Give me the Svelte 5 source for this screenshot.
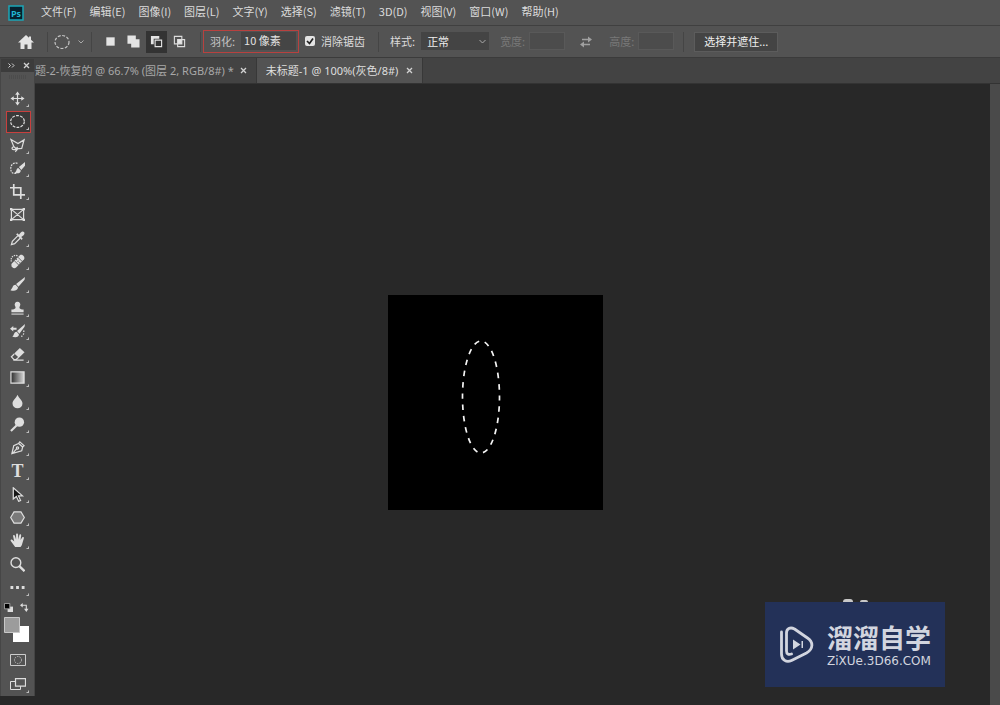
<script>
  const menus = ['文件(F)', '编辑(E)', '图像(I)', '图层(L)', '文字(Y)', '选择(S)', '滤镜(T)', '3D(D)', '视图(V)', '窗口(W)', '帮助(H)'];

  const tools = [
    { id: 'move', name: '移动' },
    { id: 'marquee', name: '椭圆选框' },
    { id: 'lasso', name: '多边形套索' },
    { id: 'quick', name: '快速选择' },
    { id: 'crop', name: '裁剪' },
    { id: 'frame', name: '图框', single: true },
    { id: 'eyedropper', name: '吸管' },
    { id: 'heal', name: '修复画笔' },
    { id: 'brush', name: '画笔' },
    { id: 'stamp', name: '仿制图章' },
    { id: 'history', name: '历史记录画笔' },
    { id: 'eraser', name: '橡皮擦' },
    { id: 'gradient', name: '渐变' },
    { id: 'blur', name: '模糊' },
    { id: 'dodge', name: '减淡' },
    { id: 'pen', name: '钢笔' },
    { id: 'type', name: '文字' },
    { id: 'select', name: '路径选择' },
    { id: 'shape', name: '多边形' },
    { id: 'hand', name: '抓手' },
    { id: 'zoom', name: '缩放', single: true },
    { id: 'more', name: '更多' }
  ];
  let active = $state('marquee');
  let feather = $state('10 像素');
  let smooth = $state(true);
</script>

{#snippet cross()}
  <svg width="7" height="7" viewBox="0 0 7 7" aria-hidden="true"><path d="M1 1l5 5M6 1 1 6" fill="none" stroke="#d2d2d2" stroke-width="1.300" /></svg>
{/snippet}

<div class="app">
  <nav class="menubar" aria-label="菜单">
    <svg class="logo" viewBox="0 0 16 16" aria-hidden="true">
      <rect x="1" y="1" width="14" height="14" fill="#06202f" stroke="#1ba6b8" stroke-width="1.500" />
      <text x="8" y="11.500" text-anchor="middle" font-size="9" font-weight="700" fill="#21b5d2">Ps</text>
    </svg>
    {#each menus as label}
      <button class="menu">{label}</button>
    {/each}
  </nav>

  <div class="options">
    <button class="home" aria-label="主页">
      <svg viewBox="0 0 16 16"><path fill="#e4e4e4" d="M8 1 0 8.500h2.500V15h4v-4.500h3V15h4V8.500H16L13 5.700V2.500h-2v1.300z" /></svg>
    </button>
    <i class="sep"></i>
    <button class="preset" aria-label="椭圆选框预设">
      <svg width="16" height="16" viewBox="0 0 16 16"><ellipse cx="8" cy="8" rx="7" ry="6.500" fill="none" stroke="#c4c4c4" stroke-width="1.200" stroke-dasharray="3 1.500" /></svg>
      <svg width="6" height="4" viewBox="0 0 6 4"><path d="M.5 .5 3 3 5.500 .5" fill="none" stroke="#aaa" /></svg>
    </button>
    <i class="sep"></i>
    <div class="modes">
      <button aria-label="新选区"><svg viewBox="0 0 14 14"><path fill="#e4e4e4" d="M2.500 2.500h9v9h-9z" /></svg></button>
      <button aria-label="添加到选区"><svg viewBox="0 0 14 14"><path fill="#e4e4e4" d="M.5 .5h9v4h4v9h-9v-4h-4z" /></svg></button>
      <button class="on" aria-label="从选区减去"><svg viewBox="0 0 14 14"><path fill="#e4e4e4" d="M1 1h9v3H4v6H1z" /><path fill="none" stroke="#e4e4e4" stroke-width="1.200" d="M5.500 5.500h7v7h-7z" /></svg></button>
      <button aria-label="与选区交叉"><svg viewBox="0 0 14 14"><path fill="none" stroke="#dcdcdc" stroke-width="1.200" d="M1.500 1.500h8v8h-8zM5 5h7.500v7.500H5z" /><path fill="#e4e4e4" d="M5 5h4.500v4.500H5z" /></svg></button>
    </div>
    <i class="sep"></i>
    <label class="feather">羽化:<input bind:value={feather} /></label>
    <label class="check">
      <input type="checkbox" bind:checked={smooth} />
      消除锯齿
    </label>
    <i class="sep"></i>
    <label class="style">样式:
      <span class="selectbox">
        <select><option>正常</option></select>
        <svg width="7" height="5" viewBox="0 0 7 5"><path d="M.5 1 3.500 4 6.500 1" fill="none" stroke="#aaa" /></svg>
      </span>
    </label>
    <label class="dim">宽度:<input disabled /></label>
    <button class="swap" aria-label="交换宽度和高度">
      <svg viewBox="0 0 12 12"><path fill="none" stroke="#a0a0a0" stroke-width="1.300" d="M2 3.500h7M3 8.500h7" /><path fill="#a0a0a0" d="M8 .5 12 3.500 8 6.500zM4 5.500 0 8.500l4 3z" /></svg>
    </button>
    <label class="dim">高度:<input disabled /></label>
    <i class="sep"></i>
    <button class="mask">选择并遮住...</button>
  </div>

  <div class="tabs" role="tablist">
    <div class="tab first"><button role="tab" aria-selected="false">题-2-恢复的 @ 66.7% (图层 2, RGB/8#) *</button><button class="close" aria-label="关闭">{@render cross()}</button></div>
    <div class="tab current"><button role="tab" aria-selected="true">未标题-1 @ 100%(灰色/8#)</button><button class="close" aria-label="关闭">{@render cross()}</button></div>
  </div>

  <main class="workspace">
    <div class="stage">
      <svg class="document" viewBox="0 0 215 215" role="img" aria-label="文档">
        <rect width="215" height="215" fill="#000" />
        <ellipse cx="93" cy="102" rx="18.500" ry="56" fill="none" stroke="#f4f4f4" stroke-width="1.700" stroke-dasharray="5.500 5.820" stroke-dashoffset="2" />
      </svg>
    </div>
    <div class="scrollbar"></div>
  </main>

  <aside class="toolbox" aria-label="工具">
    <header>
      <svg width="7" height="5" viewBox="0 0 7 5" aria-hidden="true"><path d="M.5 .5l2 2-2 2M4 .5l2 2-2 2" fill="none" stroke="#d2d2d2" /></svg>
      <button aria-label="关闭工具栏">{@render cross()}</button>
    </header>
    <div class="grip"></div>
    <div class="tools">
      {#each tools as t}
        <button class="tool" class:active={active === t.id} aria-label={t.name} onclick={() => (active = t.id)}>
          {#if t.id === 'type'}
            <span class="letter">T</span>
          {:else}
          <svg class="glyph" viewBox="0 0 16 16" fill="none" stroke="#dedede" stroke-width="1.300">
            {#if t.id === 'move'}
              <path d="M8 2v12M2 8h12" /><path fill="#dedede" stroke="none" d="M8 .5 10.500 4h-5zM8 15.500 5.500 12h5zM.5 8 4 5.500v5zM15.500 8 12 10.500v-5z" />
            {:else if t.id === 'marquee'}
              <ellipse cx="8" cy="8" rx="7.300" ry="6.300" stroke-dasharray="3 1.300" />
            {:else if t.id === 'lasso'}
              <path d="M1 1.500 8.500 6 15 2 12.500 11 6.500 11.500 4 9z" /><path d="M4 9.500c-2.500 0-2.500 3 0 3s3.500-1 3.500-3c1 2 0 4-2 5" />
            {:else if t.id === 'quick'}
              <path stroke-dasharray="2 1" d="M8 2.500C4 1 .8 4 .8 8s2 6 6 5" /><path fill="#dedede" stroke="none" d="M16 1 9.500 6.500l2.500 3L16 5zM8.800 7.500c-2.300.5-1.300 3.500-3.800 5 3 1.500 6.500.5 6.500-2.500z" />
            {:else if t.id === 'crop'}
              <path stroke-width="1.800" d="M4 0v11.500h12M0 4h11.500v12" />
            {:else if t.id === 'frame'}
              <path d="M1.500 2.500h13v11h-13zM1.500 2.500l13 11M14.500 2.500l-13 11" /><path fill="#dedede" stroke="none" d="M0 1h2.500v2.500H0zM13.500 1H16v2.500h-2.500zM0 12.500h2.500V15H0zM13.500 12.500H16V15h-2.500z" />
            {:else if t.id === 'eyedropper'}
              <path d="M8.500 5 2.500 11 1.500 14.500 5 13.500l6-6" /><path fill="#dedede" stroke="none" d="m6.500 3.500 1.500-1L9.500 4l2-2.500c2.500-2.500 5.500.5 3 3L12 6.500l1.500 1.500-1 1.500z" />
            {:else if t.id === 'heal'}
              <path stroke-dasharray="1.500 1" d="M8 2C4 0 0 4 1.500 8" /><path fill="#dedede" stroke="none" d="M10.500 1.200c2.500-1.500 6 1.500 4.500 4.500L6.500 14.500c-2.500 2-6-1-4.800-4z" /><path stroke="#555" stroke-width=".9" d="m8.300 3.300 5 5M4.500 7l5 5" /><path stroke="#555" stroke-dasharray="1 1.500" d="m6.500 5.500 4.500 4.500" />
            {:else if t.id === 'brush'}
              <path fill="#dedede" stroke="none" d="M16 0 6.500 7.500 9 10.500 15.500 3zM6 8.200c-3.500 0-2.500 3.300-5.500 5.800 3.500 1.200 8.200.5 8-3z" />
            {:else if t.id === 'stamp'}
              <path fill="#dedede" stroke="none" d="M8 .8a3 3 0 0 0-2.500 4.700c1 1.500.5 3.500-4 3.500v3h13V9c-4.500 0-5-2-4-3.500A3 3 0 0 0 8 .8z" /><path stroke-width="1.800" stroke="#aaa" d="M1.500 14h13" />
            {:else if t.id === 'history'}
              <path fill="#dedede" stroke="none" d="M16 0 7.500 7.500 10 10.500 15.500 3zM7.200 8.200c-3 0-2.500 3.300-4.700 5.500 3.500 1 7.300.5 7-2.700zM0 5l3.500-3v2H7v2H3.500v2z" /><path stroke-dasharray="1.500 1.500" d="M14.500 7c1 3-.5 6-4 7" />
            {:else if t.id === 'eraser'}
              <path fill="#dedede" stroke="none" d="m10.500 1 5 4.500L9.500 11.500l-5-4.500z" /><path d="M4.500 7.500 1.500 10.500l2.800 3 2 0 3-2.500M3.500 14h11" />
            {:else if t.id === 'gradient'}
              <defs><linearGradient id="ramp"><stop stop-color="#2c2c2c" /><stop offset="1" stop-color="#d8d8d8" /></linearGradient></defs>
              <path fill="url(#ramp)" d="M1 2h14v12H1z" />
            {:else if t.id === 'blur'}
              <path fill="#dedede" stroke="none" d="M8 .8c1.500 4 5.300 6 5.300 9.200a5.300 5.300 0 0 1-10.600 0C2.700 6.800 6.500 4.800 8 .8z" />
            {:else if t.id === 'dodge'}
              <circle cx="10" cy="5.500" r="5" fill="#dedede" stroke="none" /><path stroke-width="2.200" d="M7 9 1 15" />
            {:else if t.id === 'pen'}
              <path d="m10.500 2 4.500 4-1.500 1.300-1 4.200-10.500 3 2-8.500L9 3.800zM9 3.500l5 4.500M2.500 14.500l5-5.500" /><circle cx="8" cy="8.500" r="1.200" />
            {:else if t.id === 'select'}
              <path fill="#161616" d="M3.500 .8v12l3.300-2.700 2.500 5.200 2-1L9 9.500h4.300z" />
            {:else if t.id === 'shape'}
              <path fill="#7a7a7a" d="M4.300 2h7.400L15.300 8l-3.600 6H4.300L.7 8z" />
            {:else if t.id === 'hand'}
              <path fill="#dedede" stroke="none" d="M5.500 15 .8 8.500c-.8-1.500 1-2.200 2-1L4.500 9 3.300 3.500c-.2-1.600 1.700-1.700 2-.3L6.500 7V1.600c0-1.600 2-1.600 2.100 0L8.900 7l1-4.700c.3-1.400 2.200-1 2 .5L11.200 7.500l1.800-2.800c.8-1.100 2.200-.4 1.800.9L13.200 11c-.3 2-1.500 3.500-2 4z" />
            {:else if t.id === 'zoom'}
              <circle cx="6.300" cy="6" r="5.200" stroke-width="1.500" /><path stroke-width="2.500" d="m10 9.800 5.500 5.400" />
            {:else}
              <path fill="#dedede" stroke="none" d="M.5 6.500h3v3h-3zM6.500 6.500h3v3h-3zM12.500 6.500h3v3h-3z" />
            {/if}
          </svg>
          {/if}
          {#if !t.single}<i class="corner"></i>{/if}
        </button>
      {/each}
    </div>
    <div class="mini">
      <svg width="9" height="9" viewBox="0 0 10 10"><path fill="#ddd" d="M4 4h6v6H4z" /><path fill="#000" stroke="#aaa" d="M.5 .5h6v6h-6z" /></svg>
      <svg width="9" height="9" viewBox="0 0 10 10"><path fill="none" stroke="#ddd" stroke-width="1.200" d="M2 2.500h5v5" /><path fill="#ddd" d="M3 0v5L0 2.500zM4.500 6.500h5L7 10z" /></svg>
    </div>
    <svg class="swatches" viewBox="0 0 26 26"><path fill="#fff" d="M9 9h16v16H9z" /><path fill="#9c9c9c" stroke="#c8c8c8" d="M.5 .5h15v15H.5z" /></svg>
    <button class="foot" aria-label="快速蒙版"><svg width="16" height="12" viewBox="0 0 16 12"><path fill="none" stroke="#ccc" d="M.5 .5h15v11H.5z" /><circle cx="8" cy="6" r="3.500" fill="none" stroke="#bbb" stroke-dasharray="1.500 1" /></svg></button>
    <button class="foot" aria-label="屏幕模式"><svg width="16" height="12" viewBox="0 0 16 12"><path fill="#535353" stroke="#ddd" d="M.5 3.500h10v8H.5z" /><path fill="#555" stroke="#ddd" stroke-width="1.200" d="M5.500 .600h10v7.500h-10z" /></svg><i class="corner"></i></button>
  </aside>

  <div class="watermark">
    <i class="bump"></i><i class="bump small"></i>
    <svg class="play" viewBox="0 0 34 38" fill="none" stroke="#d2d5df" stroke-width="2.800" stroke-linecap="round" stroke-linejoin="round">
      <path d="M1.500 6v22c0 6 5 9 10 6.500l15-7.500c7-4 7-11 1-15L14.500 3C10 .5 6.500 3 6.500 7v18c0 3 2 4 5 3" />
      <path fill="#d2d5df" stroke="none" d="m13 13.500 7.500 5-7.500 5zM21.500 15H23v7h-1.500z" />
    </svg>
    <div class="brand"><strong>溜溜自学</strong><span>ZiXUe.3D66.COM</span></div>
  </div>
</div>

<style>
  :global(body) { margin: 0; background: #282828; }
  .app { position: relative; display: flex; flex-direction: column; min-height: 100vh; color: #dcdcdc; font: 11px/16px "Noto Sans CJK SC", sans-serif; overflow: hidden; }
  button, input, select { font: inherit; color: inherit; margin: 0; padding: 0; border: 0; background: none; box-sizing: border-box; }
  button { display: flex; align-items: center; justify-content: center; white-space: nowrap; }
  svg { display: block; flex: none; }
  label { white-space: nowrap; }

  .menubar { display: flex; align-items: center; gap: 13px; height: 25px; padding-left: 8px; background: #535353; border-bottom: 1px solid #404040; }
  .logo { width: 16px; height: 16px; margin-right: 4px; font-family: "Open Sans", sans-serif; }
  .menu { padding-bottom: 3px; }

  .options { display: flex; align-items: center; height: 31px; background: #535353; border-bottom: 1px solid #3b3b3b; padding-left: 18px; }
  .options label { line-height: 14px; padding-bottom: 1px; }
  .sep { width: 1px; height: 20px; background: #454545; flex: none; }
  .home { width: 16px; height: 16px; margin-right: 13px; }
  .home svg { width: 16px; height: 16px; }
  .preset { gap: 8px; margin: 0 7px 0 6px; }
  .modes { display: flex; align-items: center; gap: 2px; margin: 0 10px 0 8px; }
  .modes button { width: 21px; height: 22px; }
  .modes svg { width: 13px; height: 13px; }
  .modes .on { background: #333; }
  .options .feather { display: flex; align-items: center; gap: 6px; height: 20px; margin-left: 2px; padding: 0 2px 1px 6px; border: 1px solid #b8413f; color: #c4c4c4; }
  .feather input { width: 55px; height: 18px; padding: 0 0 2px 3px; background: #454545; color: #e2e2e2; }
  .check { display: flex; align-items: center; gap: 6px; margin: 0 13px 0 6px; }
  .check input { appearance: none; width: 10px; height: 10px; border-radius: 2px; background: #e4e4e4; }
  .check input:checked { background: #e4e4e4 url("data:image/svg+xml,%3Csvg xmlns='http://www.w3.org/2000/svg' viewBox='0 0 10 10'%3E%3Cpath d='M2 5l2.500 2.500L8 2.500' fill='none' stroke='%23222' stroke-width='1.700'/%3E%3C/svg%3E"); }
  .style { display: flex; align-items: center; gap: 6px; margin: 0 11px 0 11px; }
  .selectbox { display: grid; align-items: center; background: #444; width: 68px; height: 18px; }
  .selectbox > * { grid-area: 1 / 1; }
  .selectbox select { appearance: none; width: 100%; height: 18px; padding-left: 6px; color: #eee; }
  .selectbox svg { justify-self: end; margin-right: 3px; pointer-events: none; }
  .dim { display: flex; align-items: center; gap: 4px; color: #787878; }
  .dim input { width: 36px; height: 18px; background: #4c4c4c; border: 1px solid #595959; }
  .swap { margin: 0 17px 0 15px; }
  .swap svg { width: 12px; height: 12px; }
  .dim + .sep { margin: 0 10px 0 9px; }
  .mask { height: 20px; padding: 0 9px 2px; background: #444; border: 1px solid #5c5c5c; color: #eee; }

  .tabs { display: flex; height: 25px; background: #434343; border-bottom: 1px solid #333; }
  .tab { display: flex; align-items: center; gap: 8px; padding: 0 9px; border-right: 1px solid #383838; color: #a8a8a8; font-family: "Noto Sans", "Noto Sans CJK SC", sans-serif; }
  .first { gap: 6px; padding-left: 35px; }
  .current { background: #535353; color: #dedede; }

  .workspace { flex: 1; display: flex; background: #282828; }
  .stage { flex: 1; display: flex; align-items: center; justify-content: center; padding-top: 16px; }
  .document { width: 215px; height: 215px; }
  .scrollbar { width: 10px; background: #4a4a4a; }

  .toolbox { position: absolute; left: 0; top: 59px; bottom: 9px; width: 35px; box-sizing: border-box; display: flex; flex-direction: column; background: #535353; border-left: 1px solid #464646; border-right: 1px solid #444; }
  .toolbox header { flex: none; display: flex; justify-content: space-between; align-items: center; height: 13px; padding: 0 4px 0 7px; background: #3c3c3c; }
  .grip { flex: none; height: 4px; margin: 3px 8px 8px; background: repeating-linear-gradient(90deg, #4c4c4c 0 1px, #535353 1px 2px); }
  .tools { flex: 1; display: grid; grid-auto-rows: 1fr; }
  .tool { position: relative; }
  .glyph { width: 15px; height: 15px; margin-right: 1px; }
  .letter { font: 700 18px/20px "Liberation Serif", serif; color: #dedede; }
  .tool.active { margin: 1px 3px 1px 5px; background: #3a3a3a; border: 1px solid #c8403e; }
  .tool.active .glyph { margin-right: 3px; }
  .corner { position: absolute; right: 5px; bottom: 3px; border: 1px solid transparent; border-right-color: #bbb; border-bottom-color: #bbb; width: 1px; height: 1px; box-sizing: content-box; }
  .tool.active .corner { right: 1px; bottom: 2px; }
  .mini { display: flex; justify-content: space-between; padding: 4px 5px 5px 3px; }
  .swatches { width: 26px; height: 26px; margin: 0 0 5px 3px; }
  .foot { position: relative; height: 24px; }

  .watermark { position: absolute; right: 55px; bottom: 18px; width: 180px; height: 85px; box-sizing: border-box; display: flex; align-items: center; gap: 13px; padding-left: 15px; background: #233158; color: #d2d5df; }
  .play { width: 34px; height: 38px; }
  .brand { display: flex; flex-direction: column; }
  .brand strong { font-size: 26px; line-height: 28px; font-weight: 700; padding-bottom: 4px; }
  .brand span { font: 12px/12px "DejaVu Sans", sans-serif; white-space: nowrap; }
  .bump { position: absolute; top: -3px; left: 78px; width: 10px; height: 3px; border-radius: 5px 5px 0 0; background: #c8c8c8; }
  .bump.small { top: -2px; left: 95px; width: 8px; height: 2px; }
</style>
